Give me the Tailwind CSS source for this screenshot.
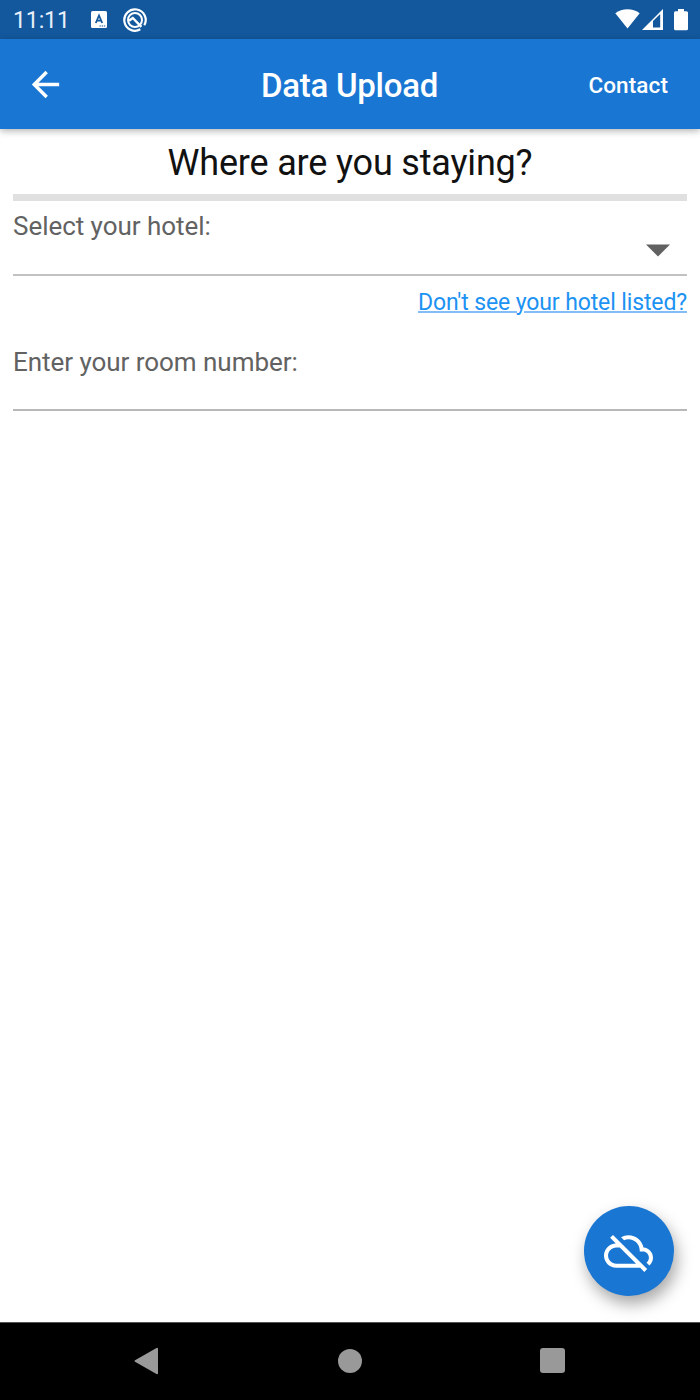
<!DOCTYPE html>
<html lang="en">
<head>
<meta charset="utf-8">
<title>Data Upload</title>
<script src="https://cdn.jsdelivr.net/npm/@tailwindcss/browser@4"></script>
</head>
<body class="bg-white">
<div class="relative flex h-[1400px] w-[700px] flex-col overflow-hidden bg-white font-['Roboto',sans-serif]">
  <!-- Status bar -->
  <div class="flex h-[39px] shrink-0 items-center bg-[#13589d] pl-[13px] pr-[12px] text-white">
    <span class="w-[78px] whitespace-nowrap pt-[2px] text-[23px] leading-[37px] tracking-[-0.1px] text-[#e8effa]">11:11</span>
    <svg class="h-[17px] w-[16px]" viewBox="0 0 16 17"><rect width="16" height="17" rx="1.5" fill="#fff"/><path d="M4.8 12 8 4.5 11.2 12M6 9.6h4" fill="none" stroke="#13589d" stroke-width="1.8"/><path d="M8.5 15h6" stroke="#13589d" stroke-width="1" stroke-dasharray="1.4 .8"/></svg>
    <svg class="ml-[16px] h-[24px] w-[24px]" viewBox="0 0 24 24" fill="none" stroke="#fff"><path d="M17.3 21.3A10.7 10.7 0 1 1 21.3 17.3" stroke-width="2.2"/><circle cx="12" cy="12" r="7" stroke-width="2"/><path d="m6 12.8 3.8-2.8 8.6 8.8" stroke-width="2.4"/></svg>
    <svg class="ml-auto h-[22px] w-[25px]" viewBox="0 0 25 22"><path d="M.3 5.2C7-.2 18-.2 24.7 5.2L12.5 20.5z" fill="#fff" transform="translate(0 -1)"/></svg>
    <svg class="ml-[2px] h-[22px] w-[21px]" viewBox="0 0 21 22"><path fill-rule="evenodd" d="M0 21 21 0v21zM11 12V18.5h7.2V5z" fill="#fff"/></svg>
    <svg class="ml-[11px] h-[22px] w-[14px]" viewBox="0 0 14 22"><path d="M4 0h6v2.2h2.5Q14 2.2 14 3.7v16q0 1.5-1.5 1.5h-11Q0 21.2 0 19.7V3.7q0-1.5 1.5-1.5H4z" fill="#fff"/></svg>
  </div>
  <!-- App bar -->
  <header class="z-10 grid h-[90px] shrink-0 grid-cols-[1fr_auto_1fr] items-center bg-[#1976d3] pl-[31px] pr-[32px] text-white shadow-[0_2px_7px_rgba(0,0,0,0.3)]">
    <svg class="-ml-[6px] h-[41px] w-[41px]" viewBox="0 0 24 24" fill="none" stroke="#fff" stroke-width="2"><path d="M20 12H5.4M12.7 4.7 5.4 12l7.3 7.3"/></svg>
    <h1 class="whitespace-nowrap pt-[3px] text-[33px] leading-[87px] font-medium tracking-[-0.27px]">Data Upload</h1>
    <span class="justify-self-end pt-[3px] text-[22.5px] font-medium tracking-[0.1px]">Contact</span>
  </header>
  <!-- Form -->
  <main class="flex grow flex-col px-[13px]">
    <h2 class="mt-[12px] h-[53px] text-center text-[36px] leading-[44px] tracking-[-0.18px] text-[#111]">Where are you staying?</h2>
    <div class="h-[7px] bg-[#e0e0e0]"></div>
    <div class="flex h-[75px] justify-between border-b-2 border-[#c2c2c2] text-[26px] tracking-[-0.04px] text-[#626262]">
      <label class="pt-[8px] leading-[34px]">Select your hotel:</label>
      <svg class="mt-[43px] mr-[17px] h-[13px] w-[24px]" viewBox="0 0 24 13"><path d="M0 .5h24L12 12.5z" fill="#616161"/></svg>
    </div>
    <a class="mt-[12px] h-[30px] self-end whitespace-nowrap text-[23px] leading-[30px] tracking-[-0.12px] text-[#1c92f2] underline decoration-[#82bdf8] decoration-[2px] underline-offset-[1px]">Don't see your hotel listed?</a>
    <label class="mt-[27px] h-[66px] border-b-2 border-[#b8b8b8] text-[26px] leading-[34px] tracking-[-0.04px] text-[#626262]">Enter your room number:</label>
  </main>
  <!-- Floating action button -->
  <button class="absolute top-[1205.5px] left-[583.5px] flex size-[90.5px] items-center justify-center rounded-full bg-[#1976d3] shadow-[3px_8px_16px_rgba(0,0,0,0.35)]">
    <svg class="size-[49px] translate-y-[1px]" viewBox="0 0 24 24" fill="#fff"><path d="M24 15c0-2.64-2.05-4.78-4.65-4.96C18.67 6.59 15.64 4 12 4c-1.33 0-2.57.36-3.65.97l1.49 1.49C10.51 6.17 11.23 6 12 6c3.04 0 5.5 2.46 5.5 5.5v.5H19c1.66 0 3 1.34 3 3 0 .99-.48 1.85-1.21 2.4l1.41 1.41c1.09-.92 1.8-2.27 1.8-3.81zM4.41 3.86 3 5.27l2.77 2.77h-.42C2.34 8.36 0 10.91 0 14c0 3.31 2.69 6 6 6h11.73l2 2 1.41-1.41zM6 18c-2.21 0-4-1.79-4-4s1.79-4 4-4h1.73l8 8z"/></svg>
  </button>
  <!-- System navigation -->
  <nav class="z-10 flex h-[78px] shrink-0 items-center justify-between border-t border-[#555] bg-black pr-[135px] pb-[2px] pl-[134px]">
    <svg class="h-[28px] w-[25px]" viewBox="0 0 25 28"><path d="M1.5 14 23 1.8v24.4z" fill="#999" stroke="#999" stroke-width="2" stroke-linejoin="round"/></svg>
    <div class="size-[24px] rounded-full bg-[#999]"></div>
    <div class="size-[25px] rounded-[3px] bg-[#999]"></div>
  </nav>
</div>
</body>
</html>
